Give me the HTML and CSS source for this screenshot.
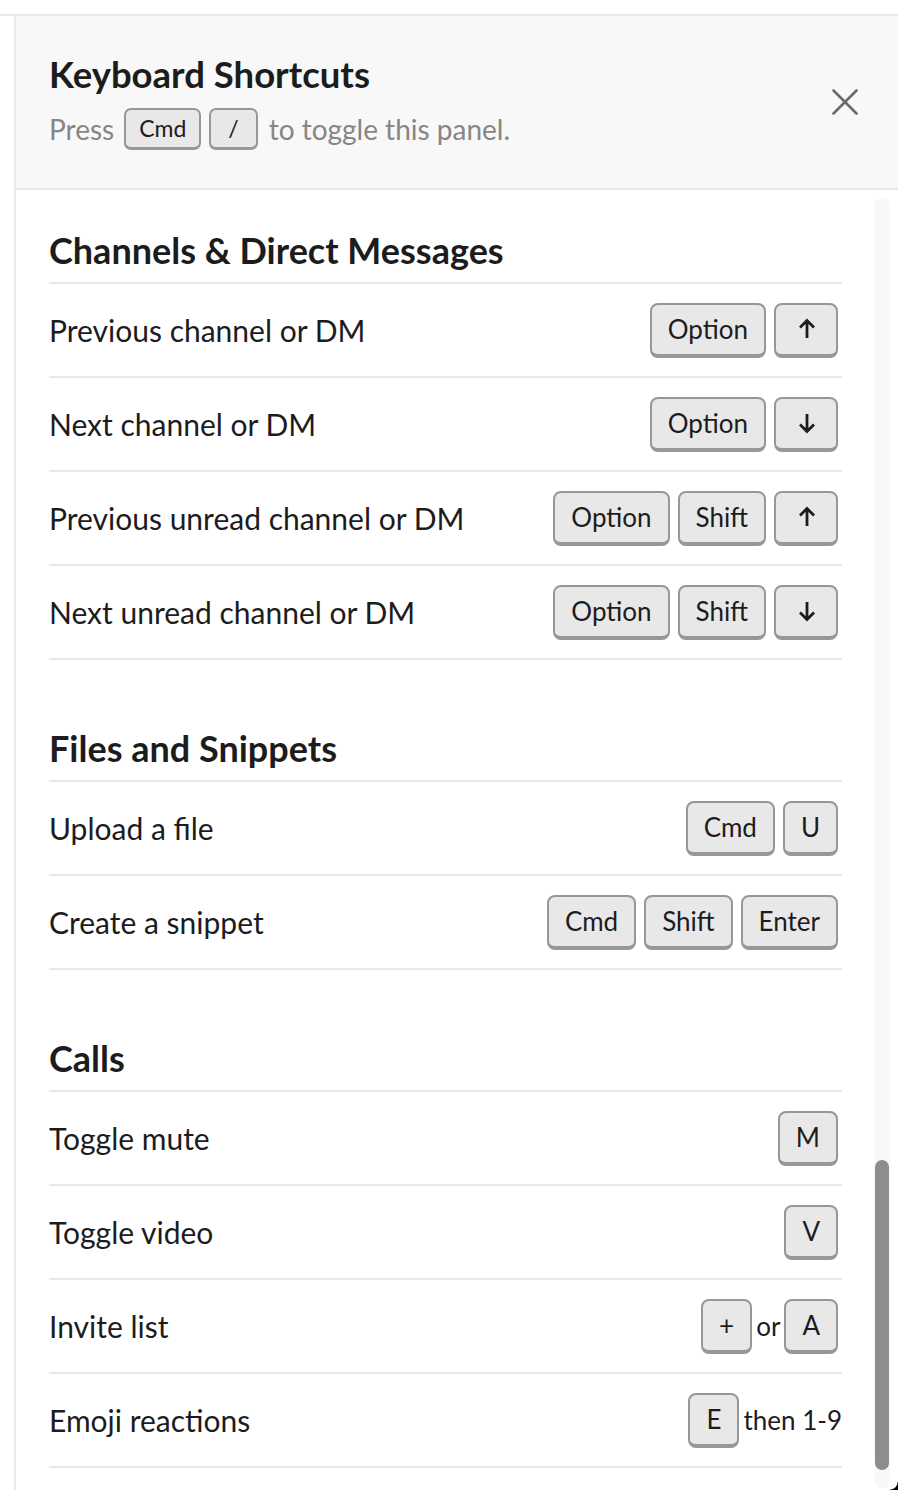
FILE: index.html
```html
<!DOCTYPE html>
<html lang="en">
<head>
<meta charset="utf-8">
<title>Keyboard Shortcuts</title>
<link rel="stylesheet" href="styles.css">
</head>
<body>
<div class="screen">
  <div class="panel">
    <div class="panel-inner">
      <header class="header">
        <div class="header-text">
          <h1 class="title">Keyboard Shortcuts</h1>
          <div class="subtitle">
            <span>Press</span>
            <span class="key key-sm">Cmd</span>
            <span class="key key-sm key-slash">/</span>
            <span>to toggle this panel.</span>
          </div>
        </div>
        <button class="close" aria-label="Close">
          <svg width="26" height="26" viewBox="0 0 26 26"><path d="M1.5 1.5 L24.5 24.5 M24.5 1.5 L1.5 24.5" stroke="#6a6a6a" stroke-width="2.6" stroke-linecap="round" fill="none"/></svg>
        </button>
      </header>

      <div class="content">
        <section class="section">
          <h2 class="section-title">Channels &amp; Direct Messages</h2>
          <div class="row"><span class="label">Previous channel or DM</span><span class="keys"><span class="key">Option</span><span class="key key-arrow"><svg width="18" height="22" viewBox="0 0 18 22"><path d="M9 20 V3 M2 9.5 L9 2.5 L16 9.5" stroke="#1d1c1d" stroke-width="2.8" fill="none"/></svg></span></span></div>
          <div class="row"><span class="label">Next channel or DM</span><span class="keys"><span class="key">Option</span><span class="key key-arrow"><svg width="18" height="22" viewBox="0 0 18 22"><path d="M9 2 V19 M2 12.5 L9 19.5 L16 12.5" stroke="#1d1c1d" stroke-width="2.8" fill="none"/></svg></span></span></div>
          <div class="row"><span class="label">Previous unread channel or DM</span><span class="keys"><span class="key">Option</span><span class="key">Shift</span><span class="key key-arrow"><svg width="18" height="22" viewBox="0 0 18 22"><path d="M9 20 V3 M2 9.5 L9 2.5 L16 9.5" stroke="#1d1c1d" stroke-width="2.8" fill="none"/></svg></span></span></div>
          <div class="row"><span class="label">Next unread channel or DM</span><span class="keys"><span class="key">Option</span><span class="key">Shift</span><span class="key key-arrow"><svg width="18" height="22" viewBox="0 0 18 22"><path d="M9 2 V19 M2 12.5 L9 19.5 L16 12.5" stroke="#1d1c1d" stroke-width="2.8" fill="none"/></svg></span></span></div>
        </section>

        <section class="section">
          <h2 class="section-title">Files and Snippets</h2>
          <div class="row"><span class="label">Upload a file</span><span class="keys"><span class="key">Cmd</span><span class="key">U</span></span></div>
          <div class="row"><span class="label">Create a snippet</span><span class="keys"><span class="key">Cmd</span><span class="key">Shift</span><span class="key">Enter</span></span></div>
        </section>

        <section class="section">
          <h2 class="section-title">Calls</h2>
          <div class="row"><span class="label">Toggle mute</span><span class="keys"><span class="key">M</span></span></div>
          <div class="row"><span class="label">Toggle video</span><span class="keys"><span class="key">V</span></span></div>
          <div class="row"><span class="label">Invite list</span><span class="keys keys-tight"><span class="key">+</span><span class="joiner">or</span><span class="key">A</span></span></div>
          <div class="row"><span class="label">Emoji reactions</span><span class="keys keys-tight"><span class="key">E</span><span class="joiner">then 1-9</span></span></div>
        </section>
      </div>

      <div class="scrollbar"><div class="thumb"></div></div>
    </div>
  </div>
  <div class="corner"></div>
</div>
</body>
</html>
```

FILE: styles.css
```css
html, body {
  margin: 0;
  padding: 0;
  background: #ffffff;
}

body {
  font-family: Lato, "Open Sans", "Liberation Sans", sans-serif;
  color: #1d1c1d;
  width: 898px;
  height: 1490px;
  overflow: hidden;
}

.screen {
  position: relative;
  padding-top: 14px;
  height: 1476px;
}

.panel {
  border-top: 2px solid #e8e8e8;
  height: 1474px;
}

.panel-inner {
  position: relative;
  margin-left: 14px;
  border-left: 2px solid #e8e8e8;
  height: 1474px;
}

.header {
  display: flex;
  align-items: center;
  justify-content: space-between;
  height: 174px;
  box-sizing: border-box;
  padding: 0 38px 0 33px;
  background: #f8f8f8;
  border-bottom: 2px solid #e8e8e8;
}

.header-text {
  display: flex;
  flex-direction: column;
  margin-top: -2px;
}

.title {
  margin: 0;
  font-size: 36.5px;
  line-height: 44px;
  font-weight: 700;
  color: #1d1c1d;
}

.subtitle {
  display: flex;
  align-items: center;
  gap: 8px;
  margin-top: 11px;
  height: 44px;
  font-size: 28px;
  color: #868686;
}

.subtitle > span:first-child {
  margin-right: 2px;
}

.subtitle > span:last-child {
  margin-left: 3px;
}

.close {
  display: flex;
  align-items: center;
  justify-content: center;
  width: 30px;
  height: 30px;
  padding: 0;
  border: 0;
  background: transparent;
}

.content {
  padding: 40px 56px 0 33px;
}

.section + .section {
  margin-top: 68px;
}

.section-title {
  margin: 0;
  font-size: 36px;
  line-height: 40px;
  font-weight: 700;
  padding-bottom: 12px;
  border-bottom: 2px solid #e8e8e8;
  color: #1d1c1d;
}

.row {
  display: flex;
  align-items: center;
  justify-content: space-between;
  height: 94px;
  box-sizing: border-box;
  border-bottom: 2px solid #e8e8e8;
}

.label {
  font-size: 30px;
  color: #1d1c1d;
}

.keys {
  display: flex;
  align-items: center;
  gap: 8px;
  margin-right: 4px;
}

.keys-tight {
  gap: 4px;
}

.keys-tight .joiner:last-child {
  margin-right: -4px;
}

.key {
  display: inline-flex;
  align-items: center;
  justify-content: center;
  box-sizing: border-box;
  height: 55px;
  padding: 0 16px;
  font-size: 26px;
  color: #1d1c1d;
  background: #e8e8e8;
  border: 2px solid #979797;
  border-bottom-width: 4px;
  border-radius: 8px;
}

.key-arrow {
  padding: 0 20px 0 22px;
}

.key-sm {
  height: 42px;
  padding: 0 13px;
  font-size: 23px;
  border-bottom-width: 3px;
  border-radius: 7px;
}

.key-slash {
  padding: 0 17px;
}

.joiner {
  font-size: 26px;
  color: #1d1c1d;
}

.scrollbar {
  position: absolute;
  top: 182px;
  left: 858px;
  width: 16px;
  height: 1290px;
  background: #f8f8f8;
  border-radius: 8px;
}

.thumb {
  position: absolute;
  top: 962px;
  left: 1px;
  width: 14px;
  height: 310px;
  background: #8d8d8d;
  border-radius: 7px;
}

.corner {
  position: absolute;
  right: 0;
  bottom: 0;
  width: 8px;
  height: 8px;
  background: radial-gradient(circle at 0 0, transparent 7px, #000 8px);
}
```
